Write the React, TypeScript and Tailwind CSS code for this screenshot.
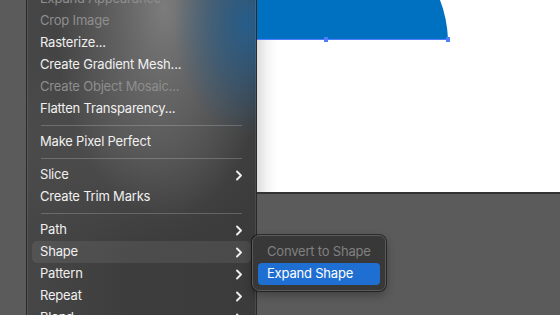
import React from 'react';

type Item =
  | { kind: 'item'; label: string; disabled?: boolean; sub?: boolean; active?: boolean }
  | { kind: 'sep' };

const items: Item[] = [
  { kind: 'item', label: 'Expand Appearance', disabled: true },
  { kind: 'item', label: 'Crop Image', disabled: true },
  { kind: 'item', label: 'Rasterize...' },
  { kind: 'item', label: 'Create Gradient Mesh...' },
  { kind: 'item', label: 'Create Object Mosaic...', disabled: true },
  { kind: 'item', label: 'Flatten Transparency...' },
  { kind: 'sep' },
  { kind: 'item', label: 'Make Pixel Perfect' },
  { kind: 'sep' },
  { kind: 'item', label: 'Slice', sub: true },
  { kind: 'item', label: 'Create Trim Marks' },
  { kind: 'sep' },
  { kind: 'item', label: 'Path', sub: true },
  { kind: 'item', label: 'Shape', sub: true, active: true },
  { kind: 'item', label: 'Pattern', sub: true },
  { kind: 'item', label: 'Repeat', sub: true },
  { kind: 'item', label: 'Blend', sub: true },
];

function Chevron() {
  return (
    <svg width="8" height="11" viewBox="0 0 8 11" className="shrink-0">
      <path d="M2 1.5 L6 5.5 L2 9.5" fill="none" stroke="#eeeeee" strokeWidth="1.9" strokeLinecap="round" strokeLinejoin="round" />
    </svg>
  );
}

export default function App() {
  return (
    <div
      className="relative w-[560px] h-[315px] overflow-hidden bg-[#5b5b5b]"
      style={{ fontFamily: 'Inter, "Noto Sans", sans-serif' }}
    >
      {/* artboard */}
      <div className="absolute left-[257px] top-0 w-[303px] h-[194px] border-b-2 border-[#333333] bg-[linear-gradient(90deg,#dcdcdc_0px,#f4f4f4_10px,#ffffff_20px)]">
        <svg width="303" height="48" className="absolute left-0 top-0">
          <path d="M0 0 L183 0 Q190 18 191 39 L0 39 Z" fill="#0070c0" />
          <line x1="0" y1="39.5" x2="191" y2="39.5" stroke="#4f7dff" strokeWidth="1" />
          <rect x="67" y="37" width="4" height="5" fill="#4f7dff" />
          <rect x="189" y="37" width="4" height="5" fill="#4f7dff" />
        </svg>
      </div>

      {/* main menu */}
      <div className="absolute left-[26px] top-[-13px] w-[231px] pb-2 px-[5px] border border-[#2a2a2a] rounded-md bg-[#3c3c3c] bg-[radial-gradient(ellipse_32%_32%_at_96%_10%,rgba(35,95,145,0.9),transparent),radial-gradient(ellipse_48%_60%_at_60%_6%,rgba(145,145,145,0.75),transparent),radial-gradient(ellipse_70%_30%_at_40%_45%,rgba(90,90,90,0.5),transparent),linear-gradient(90deg,#464646,#3d3d3d_45%,#3b3b3b)] shadow-[inset_0_0_0_1px_rgba(255,255,255,0.08)]">
        {items.map((it, i) =>
          it.kind === 'sep' ? (
            <div key={i} className="h-[11px] flex items-center px-[9px]">
              <div className="h-px w-full bg-white/20" />
            </div>
          ) : (
            <div
              key={i}
              className={`h-[22px] flex items-center justify-between pl-[8px] pr-[8px] rounded-[5px] text-[13px] tracking-[-0.2px] ${
                it.active ? 'bg-white/[0.08]' : ''
              } ${it.disabled ? 'text-[#8e8e8e]' : 'text-[#f0f0f0]'}`}
            >
              <span>{it.label}</span>
              {it.sub && <Chevron />}
            </div>
          )
        )}
      </div>

      {/* submenu */}
      <div className="absolute left-[252px] top-[235px] w-[134px] p-[5px] rounded-[7px] border border-[#5a5a5a] bg-[#383838] shadow-[0_0_0_1px_rgba(0,0,0,0.5),0_4px_10px_rgba(0,0,0,0.3)]">
        <div className="h-[22px] flex items-center pl-[9px] text-[13px] tracking-[-0.2px] text-[#808080]">Convert to Shape</div>
        <div className="h-[22px] flex items-center pl-[9px] text-[13px] tracking-[-0.2px] text-white bg-[#1f6fd2] rounded-[4px]">Expand Shape</div>
      </div>
    </div>
  );
}
